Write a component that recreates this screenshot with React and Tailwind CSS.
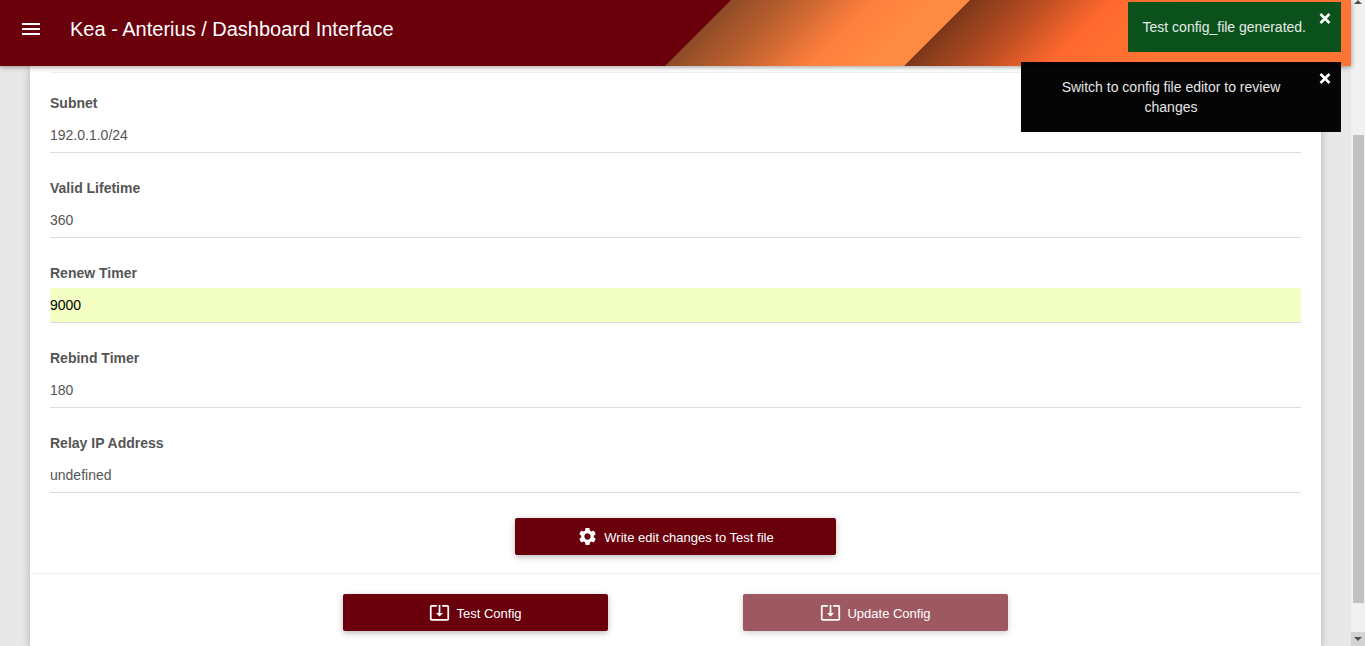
import { MdMenu, MdSettings, MdSystemUpdateAlt } from "react-icons/md";

const fields = [
  { id: "subnet", label: "Subnet", value: "192.0.1.0/24" },
  { id: "valid-lifetime", label: "Valid Lifetime", value: "360" },
  { id: "renew-timer", label: "Renew Timer", value: "9000", filled: true },
  { id: "rebind-timer", label: "Rebind Timer", value: "180" },
  { id: "relay-ip", label: "Relay IP Address", value: "undefined" },
];

function Field({ id, label, value, filled }) {
  return (
    <div className="flex flex-col gap-[5px]">
      <label htmlFor={id} className="text-sm font-bold text-[#555]">
        {label}
      </label>
      <input
        id={id}
        type="text"
        defaultValue={value}
        className={
          "h-[35px] w-full border-b border-[#ddd] text-sm outline-none " +
          (filled ? "bg-[#f4ffc3] text-black" : "bg-transparent text-[#555]")
        }
      />
    </div>
  );
}

function ActionButton({ icon: Icon, children, className, disabled }) {
  return (
    <button
      type="button"
      disabled={disabled}
      className={
        "flex h-[37px] items-center justify-center gap-1.5 rounded-xs bg-[#6b000d] text-[13px] text-white shadow-[0_2px_5px_rgba(0,0,0,0.16),0_2px_10px_rgba(0,0,0,0.12)] disabled:opacity-65 " +
        className
      }
    >
      <Icon className="size-[21px]" aria-hidden="true" />
      <span className="pt-0.5">{children}</span>
    </button>
  );
}

function HeaderArt() {
  return (
    <svg
      className="absolute inset-y-0 right-0 h-full"
      width="686"
      height="66"
      viewBox="0 0 686 66"
      preserveAspectRatio="xMaxYMid slice"
      aria-hidden="true"
    >
      <defs>
        <linearGradient id="band-a" gradientUnits="userSpaceOnUse" x1="33" y1="33" x2="153" y2="153">
          <stop offset="0" stopColor="#8c4c28" />
          <stop offset="0.3" stopColor="#c3622f" />
          <stop offset="0.6" stopColor="#ff803e" />
          <stop offset="0.85" stopColor="#ff8a42" />
          <stop offset="1" stopColor="#ff8c44" />
        </linearGradient>
        <linearGradient id="band-b" gradientUnits="userSpaceOnUse" x1="152" y1="152" x2="272" y2="272">
          <stop offset="0" stopColor="#7a381a" />
          <stop offset="0.3" stopColor="#b84c22" />
          <stop offset="0.6" stopColor="#ff692e" />
          <stop offset="1" stopColor="#ff7334" />
        </linearGradient>
      </defs>
      <path d="M66 0H686V66H0Z" fill="url(#band-a)" />
      <path d="M305 0H686V66H239Z" fill="url(#band-b)" />
    </svg>
  );
}

function Toast({ children, className }) {
  return (
    <div
      role="status"
      className={
        "relative max-w-80 py-[15px] pr-[35px] pl-[15px] text-center text-sm text-white/90 " + className
      }
    >
      {children}
      <button type="button" aria-label="Close" className="absolute top-2.5 right-2.5 size-3 text-white">
        <svg viewBox="0 0 12 12" className="size-3" fill="none" stroke="currentColor" strokeWidth="2.6">
          <path d="M1.5 2L10.5 11M10.5 2L1.5 11" />
        </svg>
      </button>
    </div>
  );
}

function Scrollbar() {
  return (
    <div className="flex w-3.5 shrink-0 flex-col bg-[#f1f1f1]" aria-hidden="true">
      <div className="flex h-[5px] justify-center">
        <svg width="8" height="5" viewBox="0 0 8 5" fill="#505050">
          <path d="M4 0L8 4H0Z" />
        </svg>
      </div>
      <div className="flex-[130]" />
      <div className="mr-px ml-0.5 flex-[468] bg-[#c1c1c1]" />
      <div className="flex-[29]" />
      <div className="flex h-3.5 items-center justify-center bg-[#d2d2d2]">
        <svg width="8" height="4" viewBox="0 0 8 4" fill="#505050">
          <path d="M0 0H8L4 4Z" />
        </svg>
      </div>
    </div>
  );
}

export default function App() {
  return (
    <div className="flex h-screen overflow-hidden bg-[#e8e8e8] font-['Liberation_Sans',Arial,sans-serif]">
      <div className="relative flex min-w-0 flex-1 flex-col">
        <header className="relative z-10 flex h-[66px] shrink-0 items-center bg-[#6b000d] pb-2 pl-[19px] text-white shadow-[0_1px_5px_rgba(0,0,0,0.4)]">
          <HeaderArt />
          <button type="button" aria-label="Open menu" className="relative">
            <MdMenu className="size-6" aria-hidden="true" />
          </button>
          <h1 className="relative ml-[27px] text-xl">Kea - Anterius / Dashboard Interface</h1>
        </header>

        <main className="flex min-h-0 flex-1 px-[30px]">
          <section className="flex-1 bg-white pt-1.5 shadow-[0_2px_8px_rgba(0,0,0,0.25)]">
            <form onSubmit={(e) => e.preventDefault()}>
              <div className="mx-5 flex flex-col gap-[25px] border-t border-[#eee] pt-5">
                {fields.map((f) => (
                  <Field key={f.id} {...f} />
                ))}
                <ActionButton icon={MdSettings} className="w-[321px] self-center">
                  Write edit changes to Test file
                </ActionButton>
              </div>
              <div className="mt-[18px] flex justify-center gap-[135px] border-t border-[#eee] py-5">
                <ActionButton icon={MdSystemUpdateAlt} className="w-[265px]">
                  Test Config
                </ActionButton>
                <ActionButton icon={MdSystemUpdateAlt} className="w-[265px]" disabled>
                  Update Config
                </ActionButton>
              </div>
            </form>
          </section>
        </main>

        <div className="absolute top-0.5 right-2.5 z-20 flex flex-col items-end gap-2.5">
          <Toast className="bg-[#00501a]/96">Test config_file generated.</Toast>
          <Toast className="bg-black/98">Switch to config file editor to review changes</Toast>
        </div>
      </div>
      <Scrollbar />
    </div>
  );
}
